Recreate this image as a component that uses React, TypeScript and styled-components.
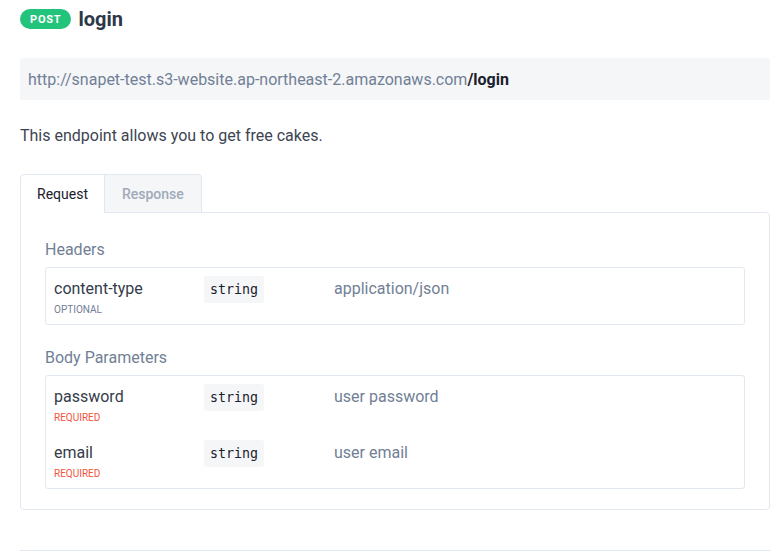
import React, { useState } from "react";
import styled, { createGlobalStyle } from "styled-components";

const Global = createGlobalStyle`
  html, body { margin: 0; padding: 0; background: #fff; }
  body { font-family: Roboto, "Noto Sans", Arial, sans-serif; color: #2d3748; }
  * { box-sizing: border-box; }
`;

const Page = styled.div`
  width: 771px;
  padding: 7px 1px 0 20px;
`;

const TitleRow = styled.div`
  display: flex;
  align-items: center;
  gap: 7px;
  height: 24px;
`;

const Method = styled.span`
  display: inline-flex;
  align-items: center;
  justify-content: center;
  height: 20px;
  padding: 0 10px;
  border-radius: 10px;
  background: #22c47b;
  color: #fff;
  font-size: 11px;
  font-weight: 700;
  letter-spacing: 0.8px;
`;

const Title = styled.h1`
  margin: 0;
  font-size: 20px;
  font-weight: 700;
  color: #2d3748;
`;

const UrlBox = styled.div`
  margin-top: 27px;
  height: 42px;
  display: flex;
  align-items: center;
  padding: 0 8px;
  background: #f5f6f8;
  border-radius: 3px;
  font-size: 16px;
  color: #718096;
`;

const UrlPath = styled.strong`
  color: #1a202c;
  font-weight: 700;
`;

const Desc = styled.p`
  margin: 25px 0 0;
  font-size: 16px;
  line-height: 22px;
  color: #3d4452;
`;

const Tabs = styled.div`
  margin-top: 27px;
  display: flex;
`;

const Tab = styled.button<{ $active?: boolean }>`
  height: 39px;
  padding: 0 ${(p) => (p.$active ? "16px" : "17px")};
  border: 1px solid #e2e8f0;
  border-bottom: ${(p) => (p.$active ? "1px solid #fff" : "1px solid #e2e8f0")};
  border-left: ${(p) => (p.$active ? "1px solid #e2e8f0" : "none")};
  border-radius: ${(p) => (p.$active ? "4px 0 0 0" : "0 4px 0 0")};
  background: ${(p) => (p.$active ? "#fff" : "#f5f6f8")};
  color: ${(p) => (p.$active ? "#1a202c" : "#a0aab8")};
  font-family: Roboto, sans-serif;
  font-size: 14px;
  font-weight: ${(p) => (p.$active ? 400 : 500)};
  margin-bottom: -1px;
  position: relative;
  z-index: 1;
  cursor: pointer;
`;

const Panel = styled.div`
  border: 1px solid #e2e8f0;
  border-radius: 0 4px 4px 4px;
  padding: 27px 24px 20px 24px;
`;

const SectionLabel = styled.div<{ $gap?: number }>`
  font-size: 16px;
  color: #718096;
  line-height: 20px;
  margin-top: ${(p) => p.$gap ?? 0}px;
`;

const ParamTable = styled.div`
  margin-top: 7px;
  border: 1px solid #e2e8f0;
  border-radius: 3px;
`;

const Row = styled.div`
  display: grid;
  grid-template-columns: 150px 130px 1fr;
  padding: 8px 8px 0;
  height: 56px;
  align-items: start;
`;

const NameCell = styled.div`
  display: flex;
  flex-direction: column;
`;

const Name = styled.span`
  font-size: 16px;
  line-height: 26px;
  color: #343c4b;
`;

const Flag = styled.span<{ $required?: boolean }>`
  font-size: 10px;
  line-height: 12px;
  margin-top: 2px;
  text-transform: uppercase;
  color: ${(p) => (p.$required ? "#f5533d" : "#718096")};
`;

const TypeBadge = styled.code`
  justify-self: start;
  display: inline-flex;
  align-items: center;
  height: 27px;
  padding: 0 6px;
  background: #f5f6f8;
  border-radius: 3px;
  font-family: "DejaVu Sans Mono", "Liberation Mono", monospace;
  font-size: 13.3px;
  color: #1a202c;
`;

const ParamDesc = styled.span`
  font-size: 16px;
  line-height: 26px;
  color: #718096;
`;

const Divider = styled.hr`
  margin: 40px 0 0;
  border: none;
  border-top: 1px solid #e2e8f0;
`;

type Param = { name: string; type: string; desc: string; required: boolean };

const headers: Param[] = [
  { name: "content-type", type: "string", desc: "application/json", required: false },
];
const body: Param[] = [
  { name: "password", type: "string", desc: "user password", required: true },
  { name: "email", type: "string", desc: "user email", required: true },
];

const Params = ({ items }: { items: Param[] }) => (
  <ParamTable>
    {items.map((p) => (
      <Row key={p.name}>
        <NameCell>
          <Name>{p.name}</Name>
          <Flag $required={p.required}>{p.required ? "Required" : "Optional"}</Flag>
        </NameCell>
        <TypeBadge>{p.type}</TypeBadge>
        <ParamDesc>{p.desc}</ParamDesc>
      </Row>
    ))}
  </ParamTable>
);

export default function App() {
  const [tab, setTab] = useState<"req" | "res">("req");
  return (
    <Page>
      <Global />
      <TitleRow>
        <Method>POST</Method>
        <Title>login</Title>
      </TitleRow>
      <UrlBox>
        http://snapet-test.s3-website.ap-northeast-2.amazonaws.com<UrlPath>/login</UrlPath>
      </UrlBox>
      <Desc>This endpoint allows you to get free cakes.</Desc>
      <Tabs>
        <Tab $active={tab === "req"} onClick={() => setTab("req")}>Request</Tab>
        <Tab $active={tab === "res"} onClick={() => setTab("res")}>Response</Tab>
      </Tabs>
      <Panel>
        <SectionLabel>Headers</SectionLabel>
        <Params items={headers} />
        <SectionLabel $gap={23}>Body Parameters</SectionLabel>
        <Params items={body} />
      </Panel>
      <Divider />
    </Page>
  );
}
